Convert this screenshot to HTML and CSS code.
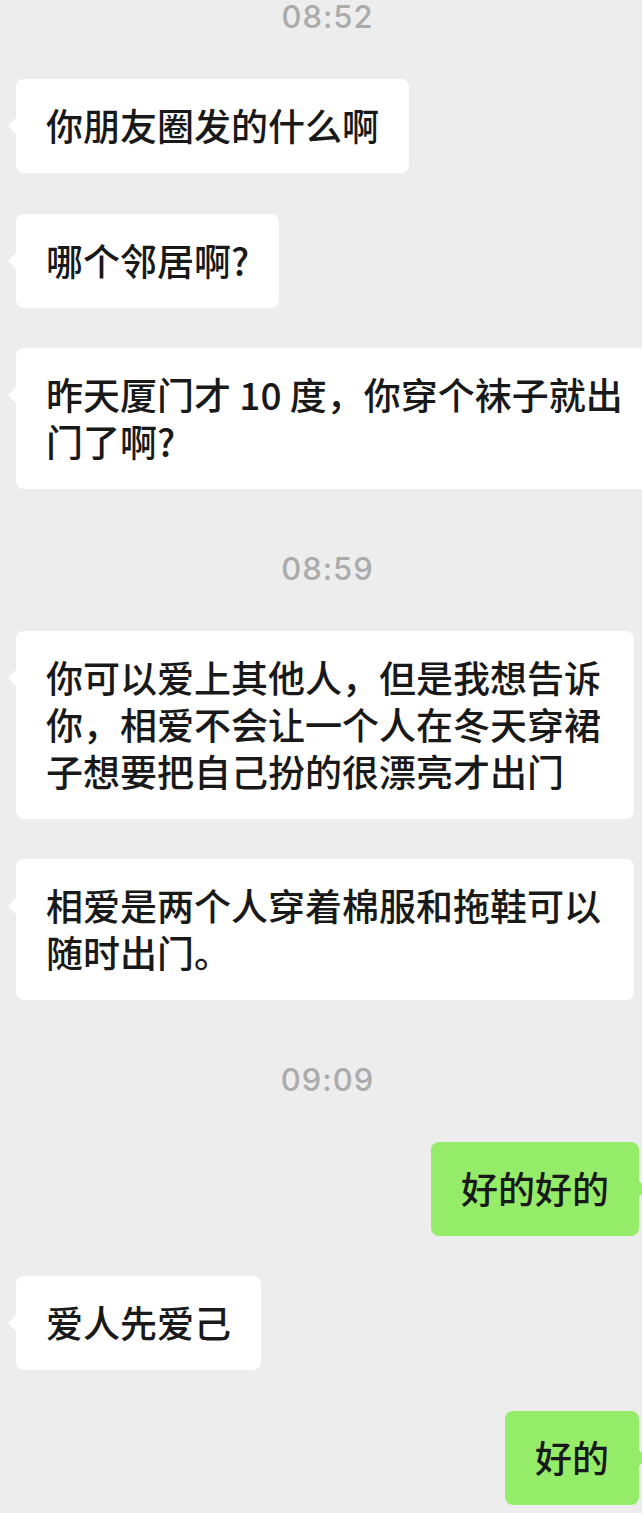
FILE: index.html
```html
<!DOCTYPE html>
<html lang="zh-CN">
<head>
<meta charset="utf-8">
<title>聊天</title>
<link rel="stylesheet" href="styles.css">
</head>
<body>
<div class="chat">
  <div class="time">08:52</div>
  <div class="row left"><div class="bubble">你朋友圈发的什么啊</div></div>
  <div class="row left"><div class="bubble">哪个邻居啊?</div></div>
  <div class="row left"><div class="bubble wide">昨天厦门才 10 度，你穿个袜子就出门了啊?</div></div>
  <div class="time">08:59</div>
  <div class="row left"><div class="bubble">你可以爱上其他人，但是我想告诉你，相爱不会让一个人在冬天穿裙子想要把自己扮的很漂亮才出门</div></div>
  <div class="row left"><div class="bubble">相爱是两个人穿着棉服和拖鞋可以随时出门。</div></div>
  <div class="time">09:09</div>
  <div class="row right"><div class="bubble">好的好的</div></div>
  <div class="row left"><div class="bubble">爱人先爱己</div></div>
  <div class="row right"><div class="bubble">好的</div></div>
</div>
</body>
</html>
```

FILE: styles.css
```css
html, body {
  margin: 0;
  padding: 0;
  background: #ededed;
  overflow: hidden;
}
body {
  width: 642px;
  height: 1513px;
  font-family: "Noto Sans CJK SC", "Noto Sans", sans-serif;
  color: #191919;
}
.chat {
  padding: 0 3px 0 16px;
}
.time {
  font-family: Inter, "Liberation Sans", sans-serif;
  font-size: 31px;
  font-weight: 500;
  letter-spacing: 1px;
  line-height: 34px;
  color: #ababab;
  text-align: center;
  margin: 62.5px 0 45px;
}
.time:first-child {
  margin-top: 0;
}
.row {
  display: flex;
  margin-top: 40.6px;
}
.row.right {
  justify-content: flex-end;
}
.bubble {
  position: relative;
  max-width: 618px;
  box-sizing: border-box;
  padding: 23px 30px 24px;
  font-size: 37px;
  font-weight: 500;
  line-height: 47px;
  border-radius: 8px;
  background: #ffffff;
}
.bubble.wide {
  max-width: 660px;
  margin-right: -40px;
}
.left .bubble::before {
  content: "";
  position: absolute;
  left: -8px;
  top: 39px;
  border-style: solid;
  border-width: 8px 8px 8px 0;
  border-color: transparent #ffffff transparent transparent;
}
.right .bubble {
  background: #95ec69;
}
.right .bubble::after {
  content: "";
  position: absolute;
  right: -8px;
  top: 39px;
  border-style: solid;
  border-width: 8px 0 8px 8px;
  border-color: transparent transparent transparent #95ec69;
}
```
